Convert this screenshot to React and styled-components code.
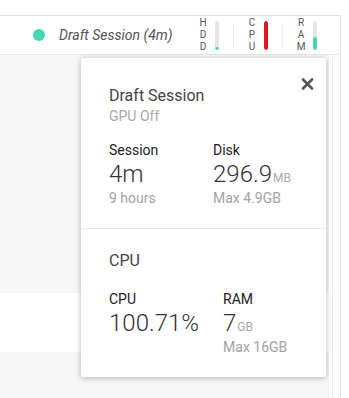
import React from 'react'
import styled, { createGlobalStyle } from 'styled-components'

const Global = createGlobalStyle`
  html, body {
    margin: 0;
    background: #fff;
    font-family: Roboto, "Liberation Sans", sans-serif;
  }
`

const Shell = styled.div`
  position: relative;
  width: 341px;
  height: 398px;
  overflow: hidden;
`

const TopStrip = styled.div`
  height: 15px;
  border-bottom: 1px solid #e4e4e4;
  width: 349px;
`

const Header = styled.div`
  height: 38px;
  display: flex;
  align-items: center;
  padding: 0 23px 0 33px;
  border-bottom: 1px solid #e6e6e6;
  border-right: 1px solid #e6e6e6;
`

const Dot = styled.span`
  width: 12px;
  height: 12px;
  border-radius: 50%;
  background: #41d9b2;
  margin-right: 14px;
  flex: none;
`

const SessionName = styled.span`
  font-size: 14px;
  font-style: italic;
  color: #555;
`

const Meters = styled.div`
  margin-left: auto;
  display: flex;
  align-items: center;
`

const Meter = styled.div`
  display: flex;
  align-items: center;
`

const Letters = styled.div`
  width: 10px;
  margin-right: 7px;
  font-size: 10px;
  line-height: 12px;
  color: #555;
  text-align: center;
  display: flex;
  flex-direction: column;
`

const Track = styled.div`
  width: 4px;
  height: 29px;
  border-radius: 2px;
  background: #e4e4e4;
  display: flex;
  flex-direction: column;
  justify-content: flex-end;
  overflow: hidden;
`

const Fill = styled.div`
  background: ${p => p.$color};
  border-radius: 2px;
`

const Divider = styled.div`
  width: 1px;
  height: 24px;
  background: #ebebeb;
  margin: 0 13px 0 14px;
`

const Body = styled.div`
  display: flex;
  height: 343px;
`

const Main = styled.div`
  flex: 1;
  display: flex;
  flex-direction: column;
`

const Band = styled.div`
  height: ${p => p.$h ? `${p.$h}px` : 'auto'};
  flex: ${p => p.$h ? 'none' : 1};
  background: ${p => p.$white ? '#fff' : '#f7f7f7'};
`

const Side = styled.div`
  width: 7px;
  margin-left: 3px;
  border-left: 1px solid #ececec;
  border-right: 1px solid #e4e4e4;
  background: #fcfcfc;
`

const Popup = styled.div`
  position: absolute;
  left: 81px;
  top: 58px;
  width: 245px;
  background: #fff;
  border-radius: 2px;
  box-shadow: 0 1px 6px rgba(0, 0, 0, 0.28);
`

const Close = styled.button`
  position: absolute;
  top: 18px;
  right: 11px;
  width: 16px;
  height: 16px;
  padding: 0;
  border: 0;
  background: transparent;
  display: flex;
  align-items: center;
  justify-content: center;
`

const Section = styled.div`
  padding: ${p => p.$top}px 20px 21px 28px;
  & + & {
    border-top: 1px solid #e8e8e8;
  }
`

const Heading = styled.div`
  margin-bottom: ${p => p.$gap}px;
`

const Title = styled.div`
  font-size: 16px;
  line-height: 20px;
  color: #444;
`

const Subtitle = styled.div`
  margin-top: 1px;
  font-size: 14px;
  line-height: 18px;
  color: #a9a9a9;
`

const Stats = styled.div`
  display: flex;
  gap: 24px;
`

const Stat = styled.div`
  min-width: 80px;
`

const Label = styled.div`
  font-size: 14px;
  line-height: 18px;
  color: #222;
`

const Value = styled.div`
  font-size: 24px;
  font-weight: 300;
  line-height: 30px;
  color: #333;
  white-space: nowrap;
`

const Unit = styled.span`
  font-size: 12px;
  font-weight: 400;
  line-height: 0;
  color: #a9a9a9;
  margin-left: 1px;
`

const Note = styled.div`
  font-size: 14px;
  line-height: 18px;
  color: #a3a3a3;
`

const meters = [
  { name: 'HDD', level: 7, color: '#41d9b2' },
  { name: 'CPU', level: 100, color: '#e8141a' },
  { name: 'RAM', level: 44, color: '#41d9b2' },
]

const CloseIcon = () => (
  <svg width="13" height="12" viewBox="0 0 13 12">
    <path d="M2 1.5 L11 10.5 M11 1.5 L2 10.5" stroke="#555" strokeWidth="2.6" strokeLinecap="round" />
  </svg>
)

const App = () => {
  return (
    <Shell>
      <Global />
      <TopStrip />
      <Header>
        <Dot />
        <SessionName>Draft Session (4m)</SessionName>
        <Meters>
          {meters.map((m, i) => (
            <React.Fragment key={m.name}>
              {i > 0 && <Divider />}
              <Meter>
                <Letters>
                  {m.name.split('').map((c, j) => <span key={j}>{c}</span>)}
                </Letters>
                <Track>
                  <Fill $color={m.color} style={{ height: `${m.level}%` }} />
                </Track>
              </Meter>
            </React.Fragment>
          ))}
        </Meters>
      </Header>
      <Body>
        <Main>
          <Band $h={238} />
          <Band $h={59} $white />
          <Band />
        </Main>
        <Side />
      </Body>

      <Popup>
        <Close aria-label="Close"><CloseIcon /></Close>
        <Section $top={28}>
          <Heading $gap={16}>
            <Title>Draft Session</Title>
            <Subtitle>GPU Off</Subtitle>
          </Heading>
          <Stats>
            <Stat>
              <Label>Session</Label>
              <Value>4m</Value>
              <Note>9 hours</Note>
            </Stat>
            <Stat>
              <Label>Disk</Label>
              <Value>296.9<Unit>MB</Unit></Value>
              <Note>Max 4.9GB</Note>
            </Stat>
          </Stats>
        </Section>
        <Section $top={22}>
          <Heading $gap={19}>
            <Title>CPU</Title>
          </Heading>
          <Stats>
            <Stat>
              <Label>CPU</Label>
              <Value>100.71%</Value>
            </Stat>
            <Stat>
              <Label>RAM</Label>
              <Value>7<Unit>GB</Unit></Value>
              <Note>Max 16GB</Note>
            </Stat>
          </Stats>
        </Section>
      </Popup>
    </Shell>
  )
}

export default App
